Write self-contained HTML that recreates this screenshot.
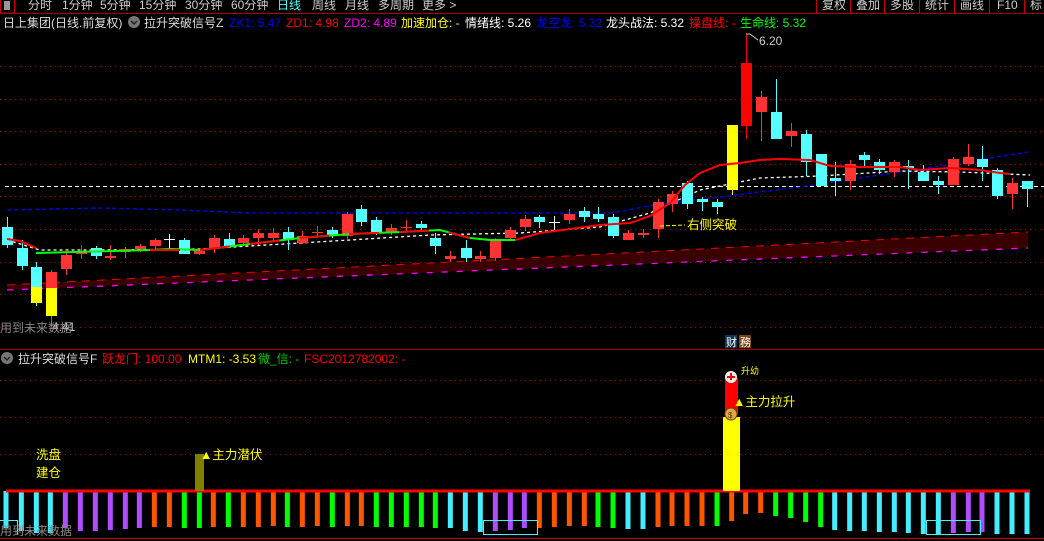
<!DOCTYPE html>
<html><head><meta charset="utf-8"><style>
html,body{margin:0;padding:0;background:#000;width:1044px;height:541px;overflow:hidden}
svg{display:block;font-family:"Liberation Sans","Noto Sans CJK SC",sans-serif}
</style></head><body>
<svg id="s" width="1044" height="541" viewBox="0 0 1044 541" xmlns="http://www.w3.org/2000/svg">
<rect width="1044" height="541" fill="#000"/>
<rect x="0.5" y="-1" width="14" height="14" fill="none" stroke="#c00"/>
<rect x="4" y="1" width="6" height="9" fill="#999"/>
<line x1="0" y1="13.5" x2="1044" y2="13.5" stroke="#a00"/>
<g font-size="12" fill="#ccc">
<text x="28" y="9">分时</text><text x="62" y="9">1分钟</text><text x="100" y="9">5分钟</text>
<text x="139" y="9">15分钟</text><text x="185" y="9">30分钟</text><text x="231" y="9">60分钟</text>
<text x="277" y="9" fill="#4ff">日线</text><text x="312" y="9">周线</text><text x="345" y="9">月线</text>
<text x="378" y="9">多周期</text><text x="422" y="9">更多 &gt;</text>
<text x="822" y="9">复权</text><text x="856" y="9">叠加</text><text x="890" y="9">多股</text>
<text x="925" y="9">统计</text><text x="960" y="9">画线</text><text x="997" y="9">F10</text><text x="1030" y="9">标</text>
</g>
<g stroke="#c00"><line x1="816.5" y1="0" x2="816.5" y2="13"/><line x1="850.5" y1="0" x2="850.5" y2="13"/><line x1="884.5" y1="0" x2="884.5" y2="13"/><line x1="919.5" y1="0" x2="919.5" y2="13"/><line x1="954.5" y1="0" x2="954.5" y2="13"/><line x1="989.5" y1="0" x2="989.5" y2="13"/><line x1="1024.5" y1="0" x2="1024.5" y2="13"/></g>
<g font-size="12">
<text x="3" y="27" fill="#ddd">日上集团(日线.前复权)</text>
<circle cx="134" cy="22" r="6" fill="#777"/><path d="M131 21l3 3 3-3" stroke="#222" stroke-width="1.5" fill="none"/>
<text x="144" y="27" fill="#ddd">拉升突破信号Z</text>
<text x="229" y="27" fill="#0000ff">ZK1: 5.47</text>
<text x="286" y="27" fill="#f00">ZD1: 4.98</text>
<text x="344" y="27" fill="#f0f">ZD2: 4.89</text>
<text x="401" y="27" fill="#ff0">加速加仓: -</text>
<text x="465" y="27" fill="#fff">情绪线: 5.26</text>
<text x="536" y="27" fill="#0000ff">龙空龙: 5.32</text>
<text x="606" y="27" fill="#fff">龙头战法: 5.32</text>
<text x="689" y="27" fill="#f00">操盘线: -</text>
<text x="740" y="27" fill="#0f0">生命线: 5.32</text>
</g>
<g id="grid" stroke="#a00" stroke-dasharray="1 4"></g>
<polygon points="7,285 1028,232 1028,248 7,290" fill="#3a0000"/>
<polyline points="7,285 1028,232" stroke="#e00" stroke-dasharray="8 7" fill="none"/>
<polyline points="7,290 1028,248" stroke="#f0f" stroke-dasharray="6 9" fill="none" stroke-width="1.3"/>
<line x1="5" y1="186.5" x2="1044" y2="186.5" stroke="#fff" stroke-dasharray="4 3"/>
<polyline points="7,210 100,208 180,210 250,213 520,213 610,213 660,204 720,197 800,187 900,172 960,163 1028,152" stroke="#00f" stroke-dasharray="4 3" fill="none" stroke-width="1.3"/>
<polyline points="7,240 40,250 100,250 200,249 300,243 350,240 430,235 520,233 600,227 650,213 700,190 760,178 820,176 900,171 960,172 1030,175" stroke="#fff" stroke-dasharray="3 3" fill="none" stroke-width="1.3"/>
<g id="candles"></g>
<polyline points="7,239 20,241 36,248" stroke="#f00" stroke-width="2" fill="none"/>
<polyline points="36,253 150,250 170,249 200,250 250,244 300,238 350,234 400,232 440,230 470,238 490,240 515,240" stroke="#0f0" stroke-width="2" fill="none"/>
<polyline points="150,250 200,250 250,244 300,238 350,234 400,232 440,230 470,238" stroke="#f00" stroke-width="2" fill="none" stroke-dasharray="30 20"/>
<polyline points="515,240 540,233 600,225 630,223 650,216 670,203 685,185 700,173 720,165 740,163 760,160 780,159 810,160 830,166 860,167 900,167 920,170 950,168 980,170 1000,173 1010,174" stroke="#f00" stroke-width="2" fill="none"/>
<text x="687" y="229" font-size="12.5" fill="#ff0">右侧突破</text>
<polyline points="660,226 685,225" stroke="#ff0" stroke-dasharray="4 2"/>
<text x="759" y="45" font-size="12" fill="#ccc">6.20</text>
<path d="M746 34 l4 0 l8 6" stroke="#ccc" fill="none"/>
<text x="52" y="331" font-size="12" fill="#ccc">4.41</text>
<text x="0" y="332" font-size="12" fill="#888">用到未来数据</text>
<rect x="725" y="335" width="12" height="13" fill="#135"/><text x="726" y="346" font-size="11" fill="#fff">财</text>
<rect x="739" y="335" width="12" height="13" fill="#741"/><text x="740" y="346" font-size="11" fill="#fff">務</text>
<line x1="0" y1="349.5" x2="1044" y2="349.5" stroke="#a00"/>
<g font-size="12">
<circle cx="7" cy="358" r="6" fill="#777"/><path d="M4 357l3 3 3-3" stroke="#222" stroke-width="1.5" fill="none"/>
<text x="18" y="363" fill="#ddd">拉升突破信号F</text>
<text x="102" y="363" fill="#f00">跃龙门: 100.00</text>
<text x="188" y="363" fill="#ff0">MTM1: -3.53</text>
<text x="258" y="363" fill="#0c0">微_信: -</text>
<text x="304" y="363" fill="#f00">FSC2012782002: -</text>
</g>
<g id="grid2" stroke="#a00" stroke-dasharray="1 4"></g>
<g id="bars"></g>
<line x1="6" y1="491" x2="1030" y2="491" stroke="#f00" stroke-width="3"/>
<rect x="195" y="454" width="9" height="37" fill="#808000"/>
<text x="200" y="459" font-size="12.5" fill="#ff0">▲主力潜伏</text>
<text x="36" y="459" font-size="12.5" fill="#ff0">洗盘</text>
<text x="36" y="477" font-size="12.5" fill="#ff0">建仓</text>
<rect x="723" y="417" width="17" height="74" fill="#ff0"/>
<rect x="725" y="378" width="13" height="36" fill="#f00"/>
<circle cx="731" cy="377" r="6" fill="#eee"/><path d="M727 377h8M731 373v7" stroke="#e00" stroke-width="2"/>
<text x="741" y="374" font-size="9" fill="#ff0">升幼</text>
<text x="733" y="406" font-size="12.5" fill="#ff0">▲主力拉升</text>
<circle cx="731" cy="414" r="6" fill="#da4" stroke="#642"/><text x="728" y="418" font-size="8" fill="#630">$</text>
<rect x="483.5" y="520.5" width="54" height="14" fill="none" stroke="#4ef"/>
<rect x="926.5" y="520.5" width="54" height="14" fill="none" stroke="#4ef"/>
<polyline points="0,520.5 17.5,520.5 17.5,535" stroke="#4ef" fill="none"/>
<text x="0" y="535" font-size="12" fill="#888">用到未来数据</text>
<line x1="0" y1="538.5" x2="1044" y2="538.5" stroke="#c00"/>
</svg>
<script>
var N="http://www.w3.org/2000/svg";
function el(p,t,a){var e=document.createElementNS(N,t);for(var k in a)e.setAttribute(k,a[k]);p.appendChild(e);return e;}
var g=document.getElementById('grid');
[66,99,131,164,196,229,262,294,327].forEach(function(y){el(g,'line',{x1:0,x2:1044,y1:y+.5,y2:y+.5});});
var g2=document.getElementById('grid2');
[380,417,454].forEach(function(y){el(g2,'line',{x1:0,x2:1044,y1:y+.5,y2:y+.5});});
var R='#ff3333',C='#55ffff',Wt='#fff';
var cs=[[7,C,227,245,217,248],[22,C,248,266,240,270],[36,C,267,303,262,306],[51,R,272,316,270,325],[66,R,255,269,250,275],[81,R,252,254,245,259],[96,C,248,256,246,259],[110,R,256,258,245,260],[125,R,249,252,247,258],[140,R,246,249,244,252],[155,R,240,246,238,250],[169,Wt,239,240,234,249],[184,C,240,254,238,254],[199,R,251,254,249,255],[214,R,238,249,235,253],[229,C,239,246,233,247],[243,R,238,243,235,245],[258,R,233,238,229,245],[273,R,233,238,228,240],[288,C,232,240,227,250],[302,R,236,243,231,244],[317,R,232,233,226,238],[332,C,230,236,227,238],[347,R,214,236,212,240],[361,C,209,222,205,226],[376,C,220,233,217,235],[391,R,228,232,224,235],[406,R,227,228,220,231],[421,C,224,228,221,232],[435,C,238,246,233,254],[450,R,256,259,251,262],[466,C,248,258,240,262],[480,R,256,259,251,262],[495,R,241,258,238,261],[510,R,230,238,227,241],[525,R,219,227,215,231],[539,C,217,222,215,228],[554,Wt,222,223,216,230],[569,R,214,220,209,224],[584,C,211,217,207,222],[598,C,214,219,207,222],[613,C,217,236,214,238],[628,R,233,240,230,240],[643,R,233,235,229,238],[658,R,202,229,199,238],[672,R,194,204,191,212],[687,C,183,204,181,209],[702,C,199,202,197,211],[717,C,202,207,199,214],[732,'#ff0',125,190,125,195],[746,'#f00',63,126,34,139],[761,R,97,112,91,141],[776,C,112,139,79,139],[791,R,131,136,123,147],[806,C,134,162,130,176],[821,C,154,186,154,186],[835,C,178,181,162,196],[850,R,164,181,160,190],[864,C,155,160,152,166],[879,C,162,170,159,174],[894,R,162,172,160,177],[908,C,166,168,160,189],[923,C,172,181,165,181],[938,C,181,185,176,194],[953,R,159,185,157,185],[968,R,157,164,144,166],[982,C,159,167,146,181],[997,C,170,196,168,199],[1012,R,183,194,178,209],[1027,C,181,189,181,207]];
var cg=document.getElementById('candles');
cs.forEach(function(c){
 el(cg,'line',{x1:c[0]+.5,x2:c[0]+.5,y1:c[4],y2:c[5],stroke:c[1]});
 el(cg,'rect',{x:c[0]-5,y:c[2],width:11,height:Math.max(1,c[3]-c[2]),fill:c[1]});
});
el(cg,'rect',{x:31,y:287,width:11,height:16,fill:'#ff0'});
el(cg,'rect',{x:46,y:288,width:11,height:28,fill:'#ff0'});
var cc={c:'#44eeff',p:'#b04cff',o:'#ff5500',g:'#00ff00'};
var seq1='ccccppppppoogg ogooogoogoogggggcccpp'.replace(/ /g,'');
var end1=[528,531,533,533,528,531,531,530,529,528,527,527,528,528,527,527,527,527,526,527,527,526,527,526,526,527,527,527,527,528,528,531,532,531,530];
var x1=[18,64,109,151,196,241,286,331,376,418,463,508,553,598,640,685,730,775,820,862,907,952,997,1042,1084,1129,1174,1219,1264,1306,1351,1396,1441,1486,1531];
var seq2='pooooggccooooge oogggg ccccccccpppccc'.replace(/ /g,'');
var x2=[13,58,103,148,193,234,279,324,369,414,456,501,546,591,635,677,722,767,812,857,902,944,989,1033,1078,1123,1165,1210,1255,1300,1345,1386,1431,1476,1521];
var end2=[528,528,527,526,526,527,528,529,529,527,526,526,526,526,521,514,513,516,518,522,527,530,531,531,532,532,533,534,534,533,532,532,534,534,534];
var bg=document.getElementById('bars');
x1.forEach(function(x,i){el(bg,'rect',{x:x/3-2.5,y:491,width:5,height:end1[i]-491,fill:cc[seq1[i]]});});
x2.forEach(function(x,i){var k=seq2[i];if(k==='e')k='o';el(bg,'rect',{x:x/3+520-2.5,y:491,width:5,height:end2[i]-491,fill:cc[k]});});
</script>
</body></html>
